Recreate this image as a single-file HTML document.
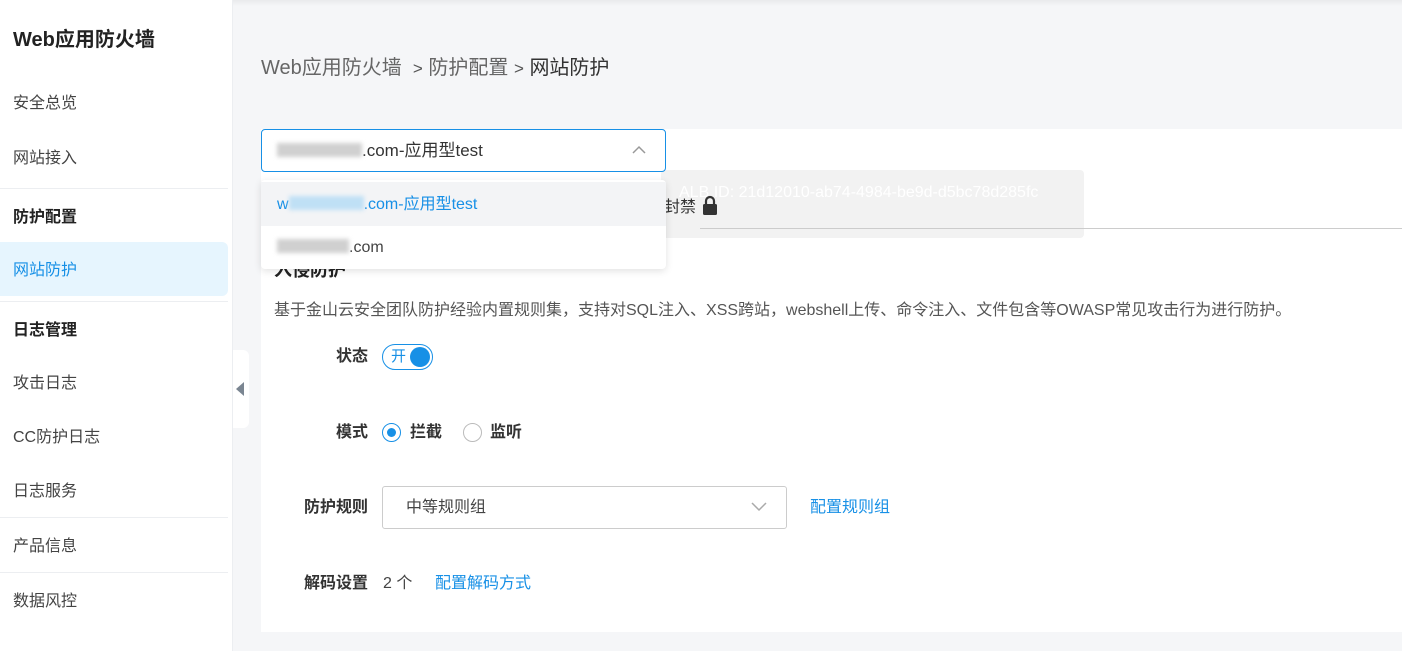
<!DOCTYPE html>
<html><head><meta charset="utf-8"><style>
*{margin:0;padding:0;box-sizing:border-box}
body{width:1402px;height:651px;overflow:hidden;background:#f5f6f8;font-family:"Liberation Sans","Noto Sans CJK SC",sans-serif;color:#333;position:relative;font-size:16px;line-height:24px}
.a{position:absolute;white-space:nowrap}
.side{position:absolute;left:0;top:0;width:233px;height:651px;background:#fff;border-right:1px solid #eceef1}
.hr{position:absolute;left:0;width:228px;height:1px;background:#eceef1}
.top{position:absolute;left:0;top:0;width:1402px;height:6px;background:linear-gradient(#e9eaec,#f5f6f8)}
.card{position:absolute;left:261px;top:129px;width:1141px;height:503px;background:#fff}
.blur{display:inline-block;height:14px;background:#d0d0d0;filter:blur(2px);vertical-align:-1px}
.lbl{font-weight:bold;color:#333}
.link{color:#1790e6}
</style></head><body>
<div class="top"></div>
<div class="side">
<div class="a" style="left:13px;top:29px;font-size:20px;line-height:22px;font-weight:bold;color:#222">Web应用防火墙</div>
<div class="a" style="left:13px;top:92px;color:#444">安全总览</div>
<div class="a" style="left:13px;top:147px;color:#444">网站接入</div>
<div class="hr" style="top:188px"></div>
<div class="a" style="left:13px;top:206px;font-weight:bold;color:#222">防护配置</div>
<div class="a" style="left:0;top:242px;width:228px;height:54px;background:#e6f5fe;border-radius:0 6px 6px 0"></div>
<div class="a" style="left:13px;top:259px;color:#1790e6">网站防护</div>
<div class="hr" style="top:301px"></div>
<div class="a" style="left:13px;top:319px;font-weight:bold;color:#222">日志管理</div>
<div class="a" style="left:13px;top:372px;color:#444">攻击日志</div>
<div class="a" style="left:13px;top:426px;color:#444">CC防护日志</div>
<div class="a" style="left:13px;top:480px;color:#444">日志服务</div>
<div class="hr" style="top:517px"></div>
<div class="a" style="left:13px;top:535px;color:#444">产品信息</div>
<div class="hr" style="top:572px"></div>
<div class="a" style="left:13px;top:590px;color:#444">数据风控</div>
</div>
<div class="a" style="left:233px;top:350px;width:16px;height:78px;background:#fff;border-radius:0 6px 6px 0"></div>
<div class="a" style="left:236px;top:382px;width:0;height:0;border-top:7px solid transparent;border-bottom:7px solid transparent;border-right:8px solid #7a8591"></div>
<div class="a" style="left:261px;top:56px;font-size:20px;line-height:24px;color:#666">Web应用防火墙 &nbsp;<span style="font-size:17px;color:#555">&gt;</span> 防护配置 <span style="font-size:17px;color:#555">&gt;</span> <span style="color:#333">网站防护</span></div>
<div class="card"></div>
<div class="a" style="left:661px;top:170px;width:423px;height:68px;background:#f2f2f2;border-radius:4px"></div>
<div class="a" style="left:679px;top:181px;color:#fff">ALB ID: 21d12010-ab74-4984-be9d-d5bc78d285fc</div>
<div class="a" style="left:664px;top:196px;color:#333">封禁</div>
<svg class="a" style="left:701px;top:194px" width="18" height="22"><path d="M5 10 V7 a4 4 0 0 1 8 0 V10" fill="none" stroke="#333" stroke-width="2.2"/><rect x="2" y="10" width="14" height="11" rx="1.5" fill="#333"/></svg>
<div class="a" style="left:700px;top:228px;width:702px;height:1px;background:#ccc"></div>
<div class="a" style="left:274px;top:258px;font-weight:bold;font-size:18px;color:#222">入侵防护</div>
<div class="a" style="left:274px;top:299px;color:#555">基于金山云安全团队防护经验内置规则集，支持对SQL注入、XSS跨站，webshell上传、命令注入、文件包含等OWASP常见攻击行为进行防护。</div>
<div class="a lbl" style="left:336px;top:345px">状态</div>
<div class="a" style="left:382px;top:344px;width:51px;height:26px;border:1px solid #1790e6;border-radius:13px"></div>
<div class="a" style="left:391px;top:345px;color:#1790e6;font-size:15px">开</div>
<div class="a" style="left:410px;top:347px;width:20px;height:20px;border-radius:50%;background:#1790e6"></div>
<div class="a lbl" style="left:336px;top:421px">模式</div>
<div class="a" style="left:382px;top:423px;width:19px;height:19px;border:1px solid #1790e6;border-radius:50%"></div>
<div class="a" style="left:387px;top:428px;width:9px;height:9px;background:#1790e6;border-radius:50%"></div>
<div class="a lbl" style="left:410px;top:421px">拦截</div>
<div class="a" style="left:463px;top:423px;width:19px;height:19px;border:1px solid #bbb;border-radius:50%"></div>
<div class="a lbl" style="left:490px;top:421px">监听</div>
<div class="a lbl" style="left:304px;top:496px">防护规则</div>
<div class="a" style="left:382px;top:486px;width:405px;height:43px;border:1px solid #ccc;border-radius:3px"></div>
<div class="a" style="left:406px;top:496px;color:#444">中等规则组</div>
<svg class="a" style="left:750px;top:501px" width="18" height="12"><path d="M2 2 L9 9 L16 2" fill="none" stroke="#aaa" stroke-width="1.5"/></svg>
<div class="a link" style="left:810px;top:496px">配置规则组</div>
<div class="a lbl" style="left:304px;top:572px">解码设置</div>
<div class="a" style="left:383px;top:572px;color:#444">2 个</div>
<div class="a link" style="left:435px;top:572px">配置解码方式</div>
<!-- select -->
<div class="a" style="left:261px;top:129px;width:405px;height:43px;border:1px solid #1790e6;border-radius:4px;background:#fff"></div>
<div class="a" style="left:277px;top:139px;color:#333;font-size:17px"><span class="blur" style="width:85px"></span>.com-应用型test</div>
<svg class="a" style="left:632px;top:145px" width="14" height="10"><path d="M1 8 L7 2 L13 8" fill="none" stroke="#999" stroke-width="1.5"/></svg>
<div class="a" style="left:261px;top:180px;width:405px;height:89px;background:#fff;border-radius:4px;box-shadow:0 2px 8px rgba(0,0,0,.12)"></div>
<div class="a" style="left:261px;top:182px;width:405px;height:44px;background:#f3f4f6"></div>
<div class="a" style="left:277px;top:193px;color:#1790e6">w<span class="blur" style="width:75px;background:#bfe0f5"></span>.com-应用型test</div>
<div class="a" style="left:277px;top:236px;color:#444"><span class="blur" style="width:72px"></span>.com</div>
</body></html>
